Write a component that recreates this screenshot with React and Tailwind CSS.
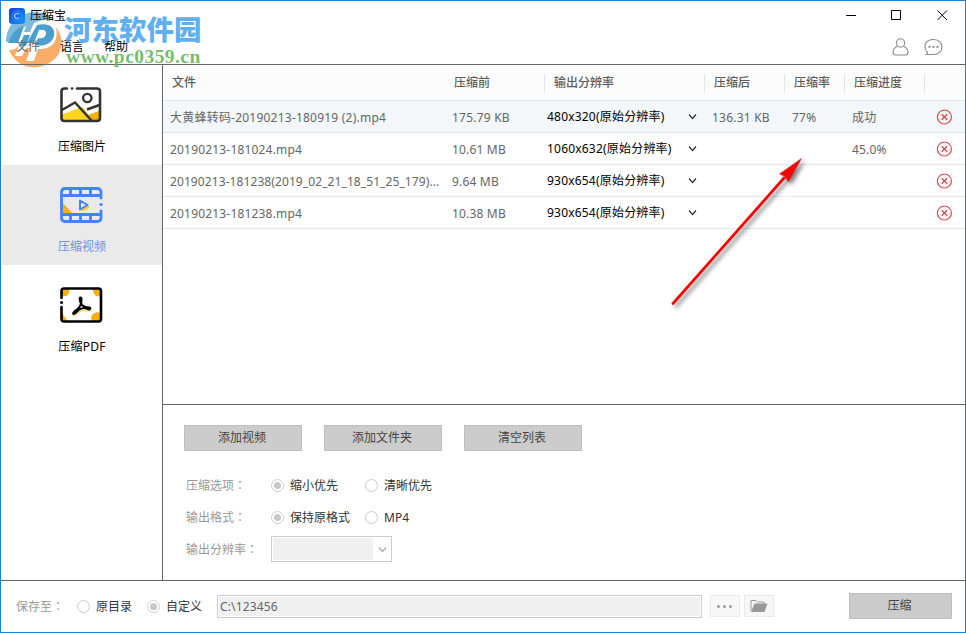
import { useState } from 'react';

const files = [
  { name: '大黄蜂转码-20190213-180919 (2).mp4', before: '175.79 KB', size: '480x320(原始分辨率)', after: '136.31 KB', rate: '77%', progress: '成功' },
  { name: '20190213-181024.mp4', before: '10.61 MB', size: '1060x632(原始分辨率)', after: '', rate: '', progress: '45.0%' },
  { name: '20190213-181238(2019_02_21_18_51_25_179)...', before: '9.64 MB', size: '930x654(原始分辨率)', after: '', rate: '', progress: '' },
  { name: '20190213-181238.mp4', before: '10.38 MB', size: '930x654(原始分辨率)', after: '', rate: '', progress: '' },
];

const columns = [
  { title: '压缩前', line: true },
  { title: '输出分辨率', line: true },
  { title: '压缩后', line: true },
  { title: '压缩率', line: true },
  { title: '压缩进度', line: true },
  { title: '', line: false },
];

const grid = 'grid grid-cols-[281px_101px_160px_80px_60px_80px_1fr]';

function ImageIcon() {
  return (
    <svg width="44" height="38" viewBox="0 0 44 38" fill="none">
      <path d="M3 28.500 17 23 24 21 33 35H3Z" fill="#ffd51f" />
      <path d="M29 29 41 24.500V35H34Z" fill="#f7b200" />
      <path d="M8 2.500H5.500Q2.500 2.500 2.500 5.500V32Q2.500 35 5.500 35H38Q41 35 41 32V5.500Q41 2.500 38 2.500H18" stroke="#333" strokeWidth="2.600" strokeLinecap="round" />
      <path d="M13 2.500h.1" stroke="#333" strokeWidth="2.600" strokeLinecap="round" />
      <path d="M3 24 16 16.500 33 35M28 23.500 40.500 19" stroke="#333" strokeWidth="2.500" />
      <circle cx="28.300" cy="12" r="4.200" stroke="#333" strokeWidth="2.300" />
    </svg>
  );
}

function VideoIcon() {
  return (
    <svg width="44" height="38" viewBox="0 0 44 38" fill="none">
      <path d="M3 16 14 28H3Z" fill="#f7b200" />
      <path d="M42 12V6.500Q42 2.500 38 2.500H6Q2.500 2.500 2.500 6.500V31.500Q2.500 35.500 6 35.500H38Q42 35.500 42 31.500V25" stroke="#4284ff" strokeWidth="2.800" strokeLinecap="round" />
      <path d="M3 9.500H41M3 28.500H41M11.500 3v7M21.500 3v7M31.500 3v7M11.500 28v7M21.500 28v7M31.500 28v7" stroke="#4284ff" strokeWidth="2.800" />
      <path d="M42 18.500h.1" stroke="#4284ff" strokeWidth="3.200" strokeLinecap="round" />
      <path d="M22.500 24.500 30 20.500" stroke="#ffc21f" strokeWidth="2" />
      <path d="M21 14.500V23.500L28.500 19Z" stroke="#4284ff" strokeWidth="2" strokeLinejoin="round" />
    </svg>
  );
}

function PdfIcon() {
  return (
    <svg width="44" height="38" viewBox="0 0 44 38" fill="none">
      <path d="M3 3H10.500Q11 11 3 10.500ZM34 3H41V10.500Q34 11 34 3ZM3 27 8.500 35H3ZM33 35Q31 31 34 28Q37 25 41 27V35Z" fill="#f7b200" />
      <path d="M2.500 12V5Q2.500 2.500 5 2.500H39.500Q42 2.500 42 5V33Q42 35.500 39.500 35.500H5Q2.500 35.500 2.500 33V21" stroke="#000" strokeWidth="2.600" strokeLinecap="round" />
      <path d="M2.500 16.500h.1" stroke="#000" strokeWidth="3" strokeLinecap="round" />
      <path d="M15 29.500Q20 27 23 24Q27 25 31.500 24.500" stroke="#ffe08a" strokeWidth="2" strokeLinecap="round" />
      <path d="M21.500 11.500C20 11 21 15.500 22 17.500C23.500 20.500 27 21.500 30.500 21.500C32.500 22.500 30.500 24 28.500 23C26 21.500 22 22 19.500 24C17.500 26 16 28.500 14.500 28C13.500 27.500 15 25.500 17.500 24C20.500 22 22.500 17.500 22.500 13.500C22.500 12.500 22.300 11.500 21.500 11.500Z" stroke="#000" strokeWidth="2.100" strokeLinejoin="round" />
    </svg>
  );
}

function Chevron({ color = '#333' }) {
  return (
    <svg width="9" height="7" viewBox="0 0 9 7" fill="none">
      <path d="M1 1.500 4.500 5.500 8 1.500" stroke={color} strokeWidth="1.200" />
    </svg>
  );
}

function FieldLabel({ children, className }) {
  return (
    <span className={`mb-px shrink-0 text-[#999] ${className}`}>
      {children}
      <span className="font-['Noto_Sans_CJK_TC',sans-serif]">：</span>
    </span>
  );
}

function Radio({ label, checked, onClick, className = '' }) {
  return (
    <button onClick={onClick} className={`flex items-center gap-[6px] text-[#333] ${className}`}>
      <span className="mb-px flex size-[13px] items-center justify-center rounded-full border border-[#ccc] bg-white">
        {checked && <span className="size-[7px] rounded-full bg-[#c8c8c8]" />}
      </span>
      {label}
    </button>
  );
}

function GrayButton({ children, className }) {
  return (
    <button className={`h-[26px] shrink-0 border border-[#bfbfbf] bg-[#ccc] pr-[2px] text-[#444] ${className}`}>
      {children}
    </button>
  );
}

function WatermarkLogo() {
  return (
    <svg className="pointer-events-none absolute left-[4px] top-[10px]" width="60" height="58" viewBox="0 0 60 58">
      <path d="M1 31C1 15 13 2 29 1C38 1 45 4 49 9C42 8 34 9 29 12L25 21H19L21 15C15 18 11 23 8 30Z" fill="#7db9dc" />
      <path d="M3 32C7 22 12 17 19 15L13 32ZM19 24H25L21 35H14ZM32 14C43 11 51 16 49 25C47 33 38 36 30 34L33 27C38 28 41 26 41 22C41 19 38 18 34 19L29 32H22Z" fill="#4b9fce" />
      <path d="M4 39C9 39 12 37 14 34L10 45H17L21 37H26L21 50H29L33 38C46 39 54 31 51 16C60 28 58 43 46 51C31 61 11 57 4 39Z" fill="#f9ad69" />
    </svg>
  );
}

function WatermarkText() {
  return (
    <div className="pointer-events-none absolute left-[63px] top-[11px] whitespace-nowrap">
      <div className="font-['Noto_Sans_CJK_SC',sans-serif] text-[27.500px] font-black leading-[32px] text-[#4aa5f0]/90">
        河东软件园
      </div>
      <div className="mt-[2px] pl-[2px] font-['Liberation_Serif',serif] text-[19.500px] font-bold leading-[22px] tracking-[0.450px] text-[#62b55a]/90">
        www.pc0359.cn
      </div>
    </div>
  );
}

function Arrow() {
  return (
    <svg className="pointer-events-none absolute left-[659px] top-[149px] drop-shadow-[3px_3px_2px_rgba(0,0,0,0.500)]" width="160" height="165" viewBox="0 0 160 165">
      <path d="M13 153.500 124 28" stroke="#f00" strokeWidth="2.700" strokeLinecap="round" />
      <path d="M141.500 8.500 119.500 24 124.500 26 128.500 31.500Z" fill="#f00" stroke="#c22" strokeWidth="0.600" />
    </svg>
  );
}

export default function App() {
  const [tab, setTab] = useState('video');
  const [option, setOption] = useState('small');
  const [format, setFormat] = useState('keep');
  const [target, setTarget] = useState('custom');

  const tabs = [
    { id: 'image', label: '压缩图片', icon: <ImageIcon /> },
    { id: 'video', label: '压缩视频', icon: <VideoIcon /> },
    { id: 'pdf', label: '压缩PDF', icon: <PdfIcon /> },
  ];

  return (
    <div className="relative flex h-[633px] w-[966px] flex-col overflow-hidden border border-[#1883d7] bg-white font-['Noto_Sans','Noto_Sans_CJK_SC',sans-serif] text-[12px] leading-[16px] text-[#666]">
      <WatermarkLogo />

      {/* Title bar and menu */}
      <header className="relative flex h-[64px] shrink-0 justify-between border-b border-[#666] text-black">
        <div>
          <div className="flex h-[29px] items-center gap-[5px] pl-[8px]">
            <span className="flex size-[16px] items-center justify-center rounded-[3px] bg-linear-to-br from-[#1d36d8] to-[#1597f5]">
              <svg width="12" height="12" viewBox="0 0 12 12" fill="none" stroke="#a9d4ff">
                <circle cx="6" cy="6" r="5" strokeWidth="0.500" strokeOpacity="0.600" />
                <path d="M8 4.500A2.500 2.500 0 1 0 8 7.500" strokeWidth="1.200" />
              </svg>
            </span>
            压缩宝
          </div>
          <nav className="flex h-[34px] items-center gap-[20px] pl-[15px]">
            <span className="text-[#666]">文件</span>
            <span>语言</span>
            <span>帮助</span>
          </nav>
        </div>
        <div className="flex flex-col items-end">
          <div className="flex h-[29px] items-center gap-[35px] pr-[17px]">
            <svg width="11" height="11" stroke="#000"><path d="M1 5.500H11" /></svg>
            <svg className="mr-px" width="11" height="11" viewBox="0 0 11 11" fill="none" stroke="#000"><path d="M.5.5h9v9h-9z" /></svg>
            <svg className="-ml-px" width="11" height="11" stroke="#000"><path d="M.5.5l9.500 9.500M10 .5l-9.500 9.500" /></svg>
          </div>
          <div className="flex h-[34px] items-center gap-[15px] pr-[22px]">
            <svg className="mb-px" width="17" height="18" viewBox="0 0 17 18" fill="none" stroke="#888" strokeWidth="1.100">
              <circle cx="8.500" cy="5" r="4.200" />
              <path d="M5.500 8.300C2.500 9.500 1 12 1 14.500C1 16.500 2 17 4 17H13C15 17 16 16.500 16 14.500C16 12 14.500 9.500 11.500 8.300" />
            </svg>
            <svg width="19" height="18" viewBox="0 0 19 18" fill="none" stroke="#888" strokeWidth="1.100">
              <path d="M3 13.500C-1 9 1 1.500 9.500 1.500C21 1.500 20.500 16.500 9.500 16.500H2.500Q4 15.500 3 13.500Z" />
              <path d="M4.500 8.800h2M8.500 8.800h2M12.500 8.800h2" strokeWidth="1.700" />
            </svg>
          </div>
        </div>
      </header>

      <div className="flex min-h-0 flex-1">
        {/* Sidebar */}
        <aside className="flex w-[162px] shrink-0 flex-col border-r border-[#666] pl-px">
          {tabs.map((item) => (
            <button
              key={item.id}
              onClick={() => setTab(item.id)}
              className={`flex h-[100px] flex-col items-center pt-[21px] ${tab === item.id ? 'bg-[#eaeaea] text-[#6d91f2]' : 'text-black'}`}
            >
              <span className="mr-[2px]">{item.icon}</span>
              <span className={item.id === 'pdf' ? 'mt-[15px] tracking-[0.300px]' : 'mt-[15px]'}>{item.label}</span>
            </button>
          ))}
        </aside>

        <main className="flex min-w-0 flex-1 flex-col">
          {/* File table */}
          <section className="h-[340px] shrink-0 border-b border-[#666]">
            <div className={`${grid} h-[36px] items-center border-b border-[#e1e8eb] bg-[#fcfcfc] font-medium text-[#5c5c5c]`}>
              <span className="pl-[9px]">文件</span>
              {columns.map((col, i) => (
                <span
                  key={i}
                  className={`flex h-[18px] items-center ${i === 0 ? 'pl-[10px]' : 'pl-[9px]'} ${col.line ? 'border-r border-[#dfe6e9]' : ''}`}
                >
                  {col.title}
                </span>
              ))}
            </div>
            {files.map((file, i) => (
              <div
                key={i}
                className={`${grid} h-[32px] items-center whitespace-nowrap border-b border-[#e1e8eb] pt-[2px] ${i === 0 ? 'bg-[#f3f7fa] tracking-[0.220px]' : 'tracking-[0.180px]'}`}
              >
                <span className={i === 2 ? 'pl-[7px] tracking-[0.090px]' : 'pl-[7px]'}>{file.name}</span>
                <span className="pl-[8px]">{file.before}</span>
                <span className="-mt-[2px] flex items-center justify-between pl-[2px] pr-[8px] tracking-[0.200px] text-black">
                  {file.size}
                  <Chevron />
                </span>
                <span className="pl-[7px]">{file.after}</span>
                <span className="pl-[7px]">{file.rate}</span>
                <span className="pl-[7px]">{file.progress}</span>
                <button className="-mt-[2px] pl-[11px]">
                  <svg width="16" height="16" viewBox="0 0 16 16" fill="none" stroke="#d9494f">
                    <circle cx="8.400" cy="8" r="7" strokeWidth="1.200" />
                    <path d="M5.600 5.200l5.600 5.600M11.200 5.200l-5.600 5.600" strokeWidth="1.400" />
                  </svg>
                </button>
              </div>
            ))}
          </section>

          {/* Options */}
          <section className="px-[21px] pt-[20px]">
            <div className="flex gap-[22px]">
              <GrayButton className="w-[118px]">添加视频</GrayButton>
              <GrayButton className="w-[118px]">添加文件夹</GrayButton>
              <GrayButton className="w-[118px]">清空列表</GrayButton>
            </div>
            <div className="mt-[19px] flex h-[32px] items-center">
              <FieldLabel className="w-[87px] pl-[2px]">压缩选项</FieldLabel>
              <Radio className="w-[94px]" label="缩小优先" checked={option === 'small'} onClick={() => setOption('small')} />
              <Radio label="清晰优先" checked={option === 'clear'} onClick={() => setOption('clear')} />
            </div>
            <div className="flex h-[32px] items-center">
              <FieldLabel className="w-[87px] pl-[2px]">输出格式</FieldLabel>
              <Radio className="w-[94px]" label="保持原格式" checked={format === 'keep'} onClick={() => setFormat('keep')} />
              <Radio label="MP4" checked={format === 'mp4'} onClick={() => setFormat('mp4')} />
            </div>
            <div className="flex h-[32px] items-center">
              <FieldLabel className="w-[87px] pl-[2px]">输出分辨率</FieldLabel>
              <div className="mb-[2px] flex h-[26px] w-[121px] items-center justify-between border border-[#ccc] py-px pl-px pr-[4px]">
                <span className="h-full w-[100px] bg-[#f0f0f0]" />
                <Chevron color="#aaa" />
              </div>
            </div>
          </section>
        </main>
      </div>

      {/* Save bar */}
      <footer className="flex h-[52px] shrink-0 items-center border-t border-[#666] pl-[15px] pr-[13px]">
        <FieldLabel className="w-[61px]">保存至</FieldLabel>
        <Radio className="w-[70px]" label="原目录" checked={target === 'source'} onClick={() => setTarget('source')} />
        <Radio className="w-[70px]" label="自定义" checked={target === 'custom'} onClick={() => setTarget('custom')} />
        <div className="flex h-[23px] w-[485px] items-center border border-[#ccc] bg-[#f0f0f0] pl-[2px] tracking-[0.150px] shadow-[inset_0_0_0_1px_#fff]">
          C:\123456
        </div>
        <button className="mb-px ml-[8px] flex h-[22px] w-[30px] items-center justify-center gap-[3px] border border-[#eaeaea] bg-[#f7f7f7] pr-[2px]">
          <span className="size-[3px] rounded-full bg-[#999]" />
          <span className="size-[3px] rounded-full bg-[#999]" />
          <span className="size-[3px] rounded-full bg-[#999]" />
        </button>
        <button className="mb-px ml-[4px] flex h-[22px] w-[30px] items-center justify-center border border-[#eaeaea] bg-[#f7f7f7]">
          <svg width="18" height="14" viewBox="0 0 18 14">
            <path d="M1 12V1.500H6L7.500 3H14V5" fill="none" stroke="#999" />
            <path d="M4.500 4.500H17.500L14.500 13H1Z" fill="#999" />
          </svg>
        </button>
        <GrayButton className="mb-[2px] ml-auto w-[103px]">压缩</GrayButton>
      </footer>

      <Arrow />
      <WatermarkText />
    </div>
  );
}
